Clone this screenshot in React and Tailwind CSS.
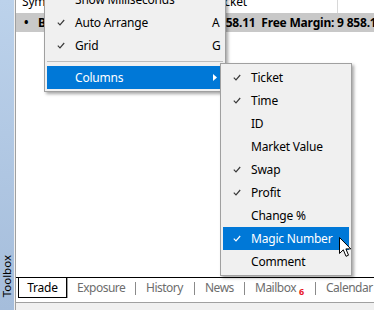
import React from 'react';

const Check = ({ white }) => (
  <svg width="8" height="7" viewBox="0 0 8 7" className="block">
    <path d="M0.8 3.6 L3 5.8 L7.2 1" fill="none" stroke={white ? '#ffffff' : '#3a3a3a'} strokeWidth="1.2" />
  </svg>
);

function MenuRow({ label, checked, shortcut, arrow, active }) {
  return (
    <div className={`h-[23px] flex items-center ${active ? 'bg-[#0078d7] text-white' : 'text-black'}`}>
      <span className="w-[28px] shrink-0 pl-[10px] flex items-center">{checked && <Check white={active} />}</span>
      <span className="flex-1 whitespace-nowrap">{label}</span>
      {shortcut && <span className="w-[11px] shrink-0">{shortcut}</span>}
      {arrow && (
        <span className="w-[11px] shrink-0 flex items-center pl-px">
          <svg width="4" height="7" viewBox="0 0 4 7"><path d="M0 0 L4 3.5 L0 7 Z" fill="#ffffff" /></svg>
        </span>
      )}
    </div>
  );
}

const columns = [
  { label: 'Ticket', checked: true },
  { label: 'Time', checked: true },
  { label: 'ID' },
  { label: 'Market Value' },
  { label: 'Swap', checked: true },
  { label: 'Profit', checked: true },
  { label: 'Change %' },
  { label: 'Magic Number', checked: true, active: true },
  { label: 'Comment' },
];

// tab label widths taken from the screenshot
const tabs = [
  { label: 'Exposure', w: 'w-[48px]' },
  { label: 'History', w: 'w-[38px]' },
  { label: 'News', w: 'w-[29px]' },
  { label: 'Mailbox', w: 'w-[50px]' },
  { label: 'Calendar', w: 'w-[48px]' },
];

export default function App() {
  return (
    <div className="relative w-[374px] h-[310px] overflow-hidden bg-white flex font-['Noto_Sans',sans-serif] text-[12px] tracking-[-0.2px]">
      {/* toolbox strip */}
      <div className="w-[14px] shrink-0 h-full bg-gradient-to-b from-[#bcd2eb] to-[#a5bddb] flex flex-col justify-end items-center pb-[13px]">
        <span className="[writing-mode:vertical-rl] rotate-180 text-[11.5px] leading-none text-black tracking-normal">Toolbox</span>
      </div>
      <div className="w-px shrink-0 h-full bg-[#f0f0f0]" />
      <div className="w-px shrink-0 h-full bg-[#a0a0a0]" />

      <div className="flex-1 min-w-0 flex flex-col">
        {/* header */}
        <div className="h-[13px] overflow-hidden">
          <div className="-mt-[6px] h-[19px] grid grid-cols-[193px_129px_1fr] leading-[16px] text-black">
            <span className="pl-[6px]">Symbol</span>
            <span className="pl-[6px] border-r border-[#d8d8d8]">Ticket</span>
            <span />
          </div>
        </div>

        {/* balance row */}
        <div className="h-[19px] bg-[#c8c8c8] flex items-center font-bold text-black whitespace-pre overflow-hidden">
          <span className="ml-[8px] w-[14px] shrink-0">•</span>
          <span className="w-[181px] shrink-0 overflow-hidden">Balance: 9 858.11 USD  Equity: 9</span>
          <span className="shrink-0">858.11  Free Margin: 9 858.11</span>
        </div>

        <div className="flex-1" />

        {/* tabs */}
        <div className="h-[25px] border-t border-black flex items-start overflow-hidden">
          <div className="ml-[2px] w-[49px] shrink-0 h-[20px] border-x border-b border-black shadow-[1px_0_0_#a0a0a0] flex items-center justify-center text-black">
            Trade
          </div>
          <div className="flex items-center h-[20px] ml-[10px] text-[#6d6d6d] tracking-[-0.5px] shrink-0">
            {tabs.map((t, i) => (
              <React.Fragment key={t.label}>
                {i > 0 && <span className="w-px h-[13px] bg-[#8a8a8a] mx-[10px] shrink-0" />}
                <span className={`${t.w} shrink-0 whitespace-nowrap`}>
                  {t.label}
                  {t.label === 'Mailbox' && (
                    <span className="relative top-[3px] ml-[3px] text-[9px] font-bold text-[#e81123] tracking-normal">6</span>
                  )}
                </span>
              </React.Fragment>
            ))}
          </div>
        </div>
        <div className="h-[8px] border-t border-[#a0a0a0] bg-[#f0f0f0]" />
      </div>

      {/* context menu */}
      <div className="absolute left-[44px] top-[-15px] w-[182px] border border-[#a0a0a0] bg-[#f0f0f0] p-[2px] shadow-[2px_2px_3px_rgba(0,0,0,0.35)]">
        <MenuRow label="Show Milliseconds" />
        <MenuRow label="Auto Arrange" checked shortcut="A" />
        <MenuRow label="Grid" checked shortcut="G" />
        <div className="h-[9px] flex items-center">
          <div className="h-px w-full bg-[#bdbdbd]" />
        </div>
        <MenuRow label="Columns" arrow active />
      </div>

      {/* columns submenu */}
      <div className="absolute left-[220px] top-[63px] w-[132px] border border-[#a0a0a0] bg-[#f0f0f0] p-[2px] shadow-[2px_2px_3px_rgba(0,0,0,0.35)]">
        {columns.map((c) => (
          <MenuRow key={c.label} {...c} />
        ))}
      </div>

      {/* mouse cursor */}
      <svg className="absolute left-[339px] top-[237px]" width="13" height="21" viewBox="0 0 13 21">
        <path d="M0.5 0.5 L0.5 16.5 L4.3 12.8 L7 19.3 L9.5 18.2 L6.9 11.9 L11.8 11.9 Z" fill="#ffffff" stroke="#000000" strokeWidth="1" strokeLinejoin="miter" />
      </svg>
    </div>
  );
}
